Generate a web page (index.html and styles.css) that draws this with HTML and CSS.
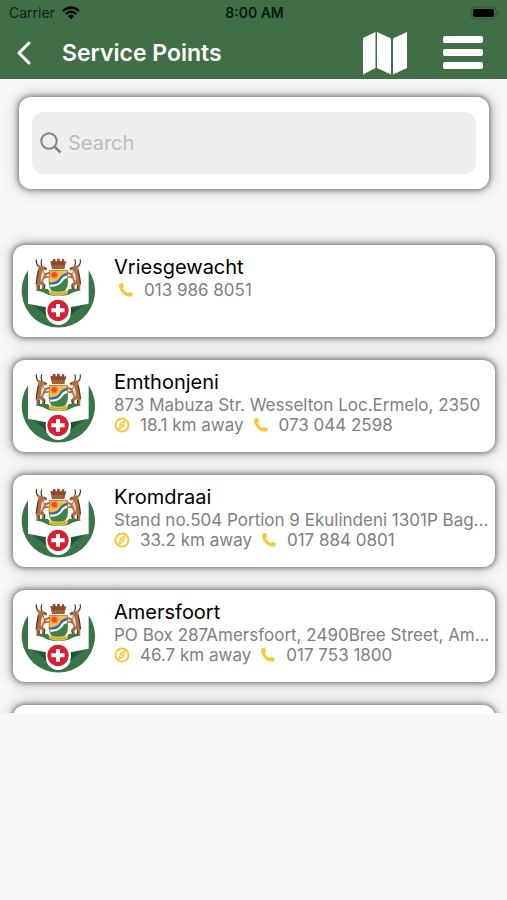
FILE: index.html
```html
<!DOCTYPE html>
<html lang="en">
<head>
<meta charset="utf-8">
<meta name="viewport" content="width=device-width, initial-scale=1">
<title>Service Points</title>
<link rel="stylesheet" href="styles.css">
</head>
<body>
<svg class="defs" aria-hidden="true">
  <defs>
    <linearGradient id="foldL" x1="0" y1="0" x2="1" y2="1"><stop offset="0" stop-color="#2f7045"/><stop offset="1" stop-color="#174528"/></linearGradient>
    <linearGradient id="foldR" x1="1" y1="0" x2="0" y2="1"><stop offset="0" stop-color="#2f7045"/><stop offset="1" stop-color="#174528"/></linearGradient>
  </defs>
  <symbol id="antelope" viewBox="0 0 44 110" preserveAspectRatio="none">
    <path d="M12 27 Q1 17 4 2 M19 26 Q14 14 18 2" fill="none" stroke="#3d2a20" stroke-width="3"/>
    <path d="M9 27 L1 22 L12 22 L23 25 L32 33 L30 38 L22 37 L25 47 L38 42 L41 46 L27 56 L37 57 L37 61 L25 64 L21 75 L27 83 L25 103 L18 103 L19 87 L11 82 L12 103 L4 103 L3 78 L4 58 L7 43 Z" fill="#ad6f45"/>
    <path d="M20 39 L24 51 L19 67 L15 76 L16 55 Z" fill="#f0d8c4"/>
    <path d="M9 38 L5 65 L3 83 M26 84 L24 103 M11 84 L11 103 M24 27 L31 33" fill="none" stroke="#513322" stroke-width="3"/>
  </symbol>
  <symbol id="crest" viewBox="34 29 222 222">
    <path d="M55 78 A110 110 0 1 0 237 78 V178 L184 204 A38 38 0 0 1 108 204 L55 178 Z" fill="#397548"/>
    <path d="M55 178 L110 189 L110 216 Q104 205 94 200 Z" fill="url(#foldL)"/>
    <path d="M237 178 L182 189 L182 216 Q188 205 198 200 Z" fill="url(#foldR)"/>
    <path d="M122 49 L129 51 L130 44 L137 44 L138 51 L142 51 L143 43 L150 43 L151 51 L156 51 L158 44 L164 45 L163 52 L170 49 L164 74 H127 Z" fill="#8c4a2c"/>
    <path d="M127 65 H165 M129 71 H163" stroke="#d59a51" stroke-width="3" stroke-dasharray="4 3"/>
    <path d="M119 78 H174 V115 Q173 142 146 151 Q119 142 118 115 Z" fill="#f8bd45"/>
    <circle cx="134" cy="91" r="13" fill="#f99b2e"/>
    <circle cx="134" cy="91" r="8" fill="#ed4b2c"/>
    <path d="M174 90 Q158 93 153 107 Q142 124 118 120 Q122 141 146 151 Q172 142 174 115 Z" fill="#fff"/>
    <path d="M174 85 Q155 88 149 102 Q140 116 118 114 V120 Q143 124 153 108 Q158 96 174 93 Z" fill="#286db0"/>
    <path d="M174 100 Q162 103 157 113 Q145 128 121 127 Q126 145 146 151 Q172 142 174 115 Z" fill="#3c8549"/>
    <path d="M119 78 H174 V115 Q173 142 146 151 Q119 142 118 115 Z" fill="none" stroke="#6c6848" stroke-width="2"/>
    <use href="#antelope" x="76" y="43" width="50" height="102"/>
    <g transform="translate(292 0) scale(-1 1)"><use href="#antelope" x="76" y="43" width="50" height="102"/></g>
    <path d="M78 138 Q96 129 113 134 L126 143 H166 L179 134 Q198 129 214 138 L193 143 L176 151 Q146 158 115 151 L99 143 Z" fill="#397b43"/>
    <path d="M117 136 Q146 148 176 136 L173 149 Q146 160 119 149 Z" fill="#e7c54a"/>
    <path d="M124 145 Q146 152 169 145" fill="none" stroke="#7b843b" stroke-width="3" stroke-dasharray="3 2"/>
    <circle cx="146" cy="198" r="38" fill="#fff"/>
    <circle cx="145" cy="198" r="32" fill="#d91f35"/>
    <path d="M139 179 h12 v13 h14 v12 h-14 v13 h-12 v-13 h-14 v-12 h14 Z" fill="#fff"/>
  </symbol>
  <symbol id="compass" viewBox="0 0 16 16">
    <circle cx="8" cy="8" r="6.5" fill="none" stroke="#fdc536" stroke-width="2"/>
    <path d="M10.8 4 L9.5 9.4 L5.2 12 L6.5 6.6 Z" fill="none" stroke="#fdc536" stroke-width="1.3"/>
    <circle cx="8" cy="8" r="1" fill="#fdc536"/>
  </symbol>
  <symbol id="phone" viewBox="0 0 16 16">
    <path d="M2 1.5 L4.4 1 Q5 1 5.3 1.6 L6 4.6 L4.6 6.2 Q6.4 9.6 9.6 11.2 L11.2 10 L14.3 10.9 Q15 11.2 14.8 12 L14 14.1 Q13.5 14.8 12.6 14.8 C6 14.4 1.3 9 1 3 Q1 2 2 1.5 Z" fill="#fdc536"/>
  </symbol>
</svg>
<div class="app">
  <header class="header">
    <div class="status">
      <div class="carrier">
        <span>Carrier</span>
        <svg class="wifi" viewBox="0 0 18 14" aria-hidden="true">
          <path d="M1 5 Q9 -2 17 5 M3.8 8 Q9 3.5 14.2 8" fill="none" stroke="currentColor" stroke-width="2.3"/>
          <path d="M5.9 10 Q9 7.5 12.1 10 L9 13.2 Z" fill="currentColor"/>
        </svg>
      </div>
      <time class="clock">8:00 AM</time>
      <svg class="battery" viewBox="0 0 30 14" aria-hidden="true">
        <rect x="1" y="1" width="25" height="12" rx="4" fill="none" stroke="#2f5638"/>
        <rect x="3" y="3" width="21" height="8" rx="2" fill="#000"/>
        <path d="M27.5 5 Q30 7 27.5 9 Z" fill="#244a2e"/>
      </svg>
    </div>
    <nav class="bar">
      <button class="icon-button" type="button" aria-label="Back">
        <svg class="back" viewBox="0 0 16 26" aria-hidden="true"><path d="M13 3 L3 13 L13 23" fill="none" stroke="#fff" stroke-width="3" stroke-linecap="round" stroke-linejoin="round"/></svg>
      </button>
      <h1 class="title">Service Points</h1>
      <button class="icon-button" type="button" aria-label="Map">
        <svg class="map" viewBox="0 0 46 44" aria-hidden="true"><path d="M1 7 L13.5 1 V37 L1 43.5 Z M15 1 L29 7.5 V43.5 L15 37 Z M31 7.5 L45 1 V37 L31 43.5 Z" fill="#fff"/></svg>
      </button>
      <button class="icon-button" type="button" aria-label="Menu">
        <svg class="menu" viewBox="0 0 40 34" aria-hidden="true"><g fill="#fff"><rect x="0" y="0" width="40" height="7" rx="2"/><rect x="0" y="13" width="40" height="7" rx="2"/><rect x="0" y="26" width="40" height="7" rx="2"/></g></svg>
      </button>
    </nav>
  </header>
  <form class="search-card" role="search">
    <label class="search">
      <svg class="glass" viewBox="0 0 22 22" aria-hidden="true"><circle cx="9" cy="9" r="7.7" fill="none" stroke="#858585" stroke-width="2"/><path d="M14.5 14.5 L20.5 20.5" stroke="#858585" stroke-width="2.5"/></svg>
      <input class="search-input" type="text" aria-label="Search" placeholder="Search">
    </label>
  </form>
  <main class="list">
    <article class="card">
      <svg class="logo" aria-hidden="true"><use href="#crest"/></svg>
      <div class="info">
        <h2 class="name">Vriesgewacht</h2>
        <div class="meta">
          <span class="phone-line only"><svg class="glyph" aria-hidden="true"><use href="#phone"/></svg>013 986 8051</span>
        </div>
      </div>
    </article>
    <article class="card">
      <svg class="logo" aria-hidden="true"><use href="#crest"/></svg>
      <div class="info">
        <h2 class="name">Emthonjeni</h2>
        <p class="address">873 Mabuza Str. Wesselton Loc.Ermelo, 2350</p>
        <div class="meta">
          <span class="distance"><svg class="glyph" aria-hidden="true"><use href="#compass"/></svg>18.1 km away</span>
          <span class="phone-line"><svg class="glyph" aria-hidden="true"><use href="#phone"/></svg>073 044 2598</span>
        </div>
      </div>
    </article>
    <article class="card">
      <svg class="logo" aria-hidden="true"><use href="#crest"/></svg>
      <div class="info">
        <h2 class="name">Kromdraai</h2>
        <p class="address">Stand no.504 Portion 9 Ekulindeni 1301P Bag...</p>
        <div class="meta">
          <span class="distance"><svg class="glyph" aria-hidden="true"><use href="#compass"/></svg>33.2 km away</span>
          <span class="phone-line"><svg class="glyph" aria-hidden="true"><use href="#phone"/></svg>017 884 0801</span>
        </div>
      </div>
    </article>
    <article class="card">
      <svg class="logo" aria-hidden="true"><use href="#crest"/></svg>
      <div class="info">
        <h2 class="name">Amersfoort</h2>
        <p class="address">PO Box 287Amersfoort, 2490Bree Street, Am...</p>
        <div class="meta">
          <span class="distance"><svg class="glyph" aria-hidden="true"><use href="#compass"/></svg>46.7 km away</span>
          <span class="phone-line"><svg class="glyph" aria-hidden="true"><use href="#phone"/></svg>017 753 1800</span>
        </div>
      </div>
    </article>
    <article class="card"></article>
  </main>
</div>
</body>
</html>
```
FILE: styles.css
```css
* { box-sizing: border-box; }
body {
  margin: 0;
  background: #f8f8f8;
  color: #000;
  font-family: Inter, "Liberation Sans", sans-serif;
}
h1, h2, p { margin: 0; font-weight: 400; }
.defs { position: absolute; width: 0; height: 0; }
.app {
  display: flex;
  flex-direction: column;
  height: 100vh;
  padding-bottom: 187px;
}
.header { position: relative; z-index: 1; flex: none; background: #3f6e47; }
.status {
  display: grid;
  grid-template-columns: 1fr auto 1fr;
  align-items: center;
  height: 26px;
  padding: 0 7px 0 9px;
  font-size: 14px;
  line-height: 16px;
}
.carrier { display: flex; align-items: center; gap: 7px; color: #12241a; }
.wifi { width: 18px; height: 14px; color: #000; }
.clock { font-weight: 600; color: #0c1a10; }
.battery { width: 30px; height: 14px; justify-self: end; }
.bar { display: flex; align-items: center; height: 53px; padding: 0 24px 0 16px; }
.icon-button { display: flex; padding: 0; border: 0; background: none; }
.back { width: 16px; height: 26px; }
.title {
  flex: 1;
  padding-left: 30px;
  color: #fff;
  font-size: 23px;
  font-weight: 600;
  line-height: 28px;
}
.map { width: 46px; height: 44px; margin-right: 35px; }
.menu { width: 40px; height: 34px; }
.search-card {
  flex: none;
  margin: 18px 18px 0 19px;
  padding: 15px 13px;
}
.search-card, .card {
  border-radius: 12px;
  background: #fff;
  box-shadow: 0 0 5px 1px rgba(0, 0, 0, 0.45), 0 0 14px 2px rgba(0, 0, 0, 0.25);
}
.search {
  display: flex;
  align-items: center;
  gap: 6px;
  height: 62px;
  padding: 0 8px;
  border-radius: 12px;
  background: #eee;
}
.glass { flex: none; width: 22px; height: 22px; }
.search-input {
  flex: 1;
  min-width: 0;
  padding: 0;
  border: 0;
  outline: 0;
  background: none;
  font: inherit;
  font-size: 20px;
  line-height: 24px;
}
.search-input::placeholder { color: #bdbdbd; opacity: 1; }
.list {
  display: flex;
  flex: 1;
  flex-direction: column;
  gap: 23px;
  min-height: 0;
  margin-top: 36px;
  padding: 20px 12px 0 13px;
  overflow: hidden;
}
.card {
  display: flex;
  flex: none;
  gap: 19px;
  min-height: 92px;
  padding: 9px 2px 9px 8px;
}
.logo { flex: none; width: 74px; height: 74px; }
.info { flex: 1; min-width: 0; }
.name { font-size: 20px; line-height: 26px; }
.address, .meta {
  color: #808080;
  font-size: 17px;
  line-height: 20px;
  white-space: nowrap;
}
.address { overflow: hidden; text-overflow: ellipsis; }
.meta { display: flex; gap: 9px; }
.distance, .phone-line { display: flex; align-items: center; gap: 10px; }
.phone-line.only { padding-left: 4px; }
.glyph { width: 16px; height: 16px; }
```
